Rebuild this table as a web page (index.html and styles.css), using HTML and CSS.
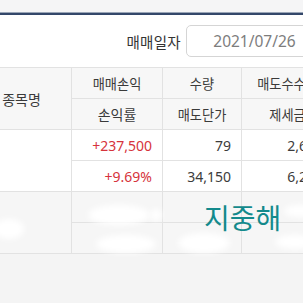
FILE: index.html
```html
<!DOCTYPE html>
<html lang="ko">
<head>
<meta charset="utf-8">
<link rel="stylesheet" href="styles.css">
</head>
<body>
<div class="page">
  <div class="topbar"></div>
  <div class="filter">
    <span class="filter-label">매매일자</span>
    <div class="date-box">2021/07/26</div>
  </div>
  <div class="table-wrap">
    <table class="grid">
      <colgroup>
        <col class="c-name"><col class="c-pl"><col class="c-qty"><col class="c-fee">
      </colgroup>
      <thead>
        <tr class="r-h1">
          <th rowspan="2">종목명</th>
          <th>매매손익</th>
          <th>수량</th>
          <th>매도수수료</th>
        </tr>
        <tr class="r-h2">
          <th>손익률</th>
          <th>매도단가</th>
          <th>제세금</th>
        </tr>
      </thead>
      <tbody>
        <tr class="r-d1">
          <td rowspan="2"></td>
          <td class="num up">+237,500</td>
          <td class="num">79</td>
          <td class="num">2,651</td>
        </tr>
        <tr class="r-d2">
          <td class="num up">+9.69%</td>
          <td class="num">34,150</td>
          <td class="num">6,213</td>
        </tr>
        <tr class="r-m1 masked">
          <td rowspan="2"></td><td></td><td></td><td></td>
        </tr>
        <tr class="r-m2 masked">
          <td></td><td></td><td></td>
        </tr>
      </tbody>
    </table>
    <div class="blob b1"></div>
    <div class="blob b2"></div>
    <div class="blob b3"></div>
    <div class="blob b4"></div>
    <div class="blob b5"></div>
    <div class="blob b6"></div>
    <div class="blob b7"></div>
    <div class="watermark">지중해</div>
  </div>
</div>
</body>
</html>
```
FILE: styles.css
```css
html, body {
  margin: 0;
  padding: 0;
  background: #f4f4f4;
}
body {
  font-family: "Noto Sans", "Noto Sans CJK KR", sans-serif;
  color: #333;
}
.page {
  width: 303px;
  height: 303px;
  overflow: hidden;
  background: #f4f4f4;
}
.topbar {
  height: 12px;
  background: #f5f5f6;
  border-bottom: 1px solid #9ba6b7;
  box-shadow: 0 2px 0 #34476a;
  margin-bottom: 2px;
}
.filter {
  background: #fff;
  height: 52px;
  display: flex;
  justify-content: flex-end;
  align-items: center;
  gap: 5px;
}
.filter-label {
  font-family: "Noto Sans CJK KR", sans-serif;
  font-size: 14.5px;
  color: #333;
  letter-spacing: 0.3px;
}
.date-box {
  flex: none;
  width: 137px;
  height: 32px;
  box-sizing: border-box;
  margin-right: -20px;
  margin-top: -1px;
  border: 1px solid #d5d5d5;
  border-radius: 5px;
  display: flex;
  align-items: center;
  justify-content: center;
  font-size: 15.5px;
  color: #7d7d7d;
  background: #fff;
}
.table-wrap {
  position: relative;
  height: 188px;
  background: #f4f4f4;
}
.grid {
  border-collapse: collapse;
  margin-left: -29px;
  table-layout: fixed;
  width: 362px;
  font-family: "Noto Sans CJK KR", sans-serif;
  font-size: 13.2px;
}
.c-name { width: 100px; }
.c-pl { width: 91px; }
.c-qty { width: 79px; }
.c-fee { width: 92px; }
.grid th, .grid td {
  border: 1px solid #e2e2e2;
  padding: 0 10px;
  white-space: nowrap;
  overflow: hidden;
}
.grid th {
  background: #f7f7f7;
  font-weight: normal;
  color: #3a3a3a;
  text-align: center;
}
.grid th:nth-child(1) { font-size: 14px; }
.grid tr { height: 31px; }
.r-h1 { height: 32px; }
.r-d1, .r-d2 { height: 32px; }
.r-m2 { height: 29px; }
.grid td {
  background: #fff;
}
.grid td.num {
  text-align: right;
  font-family: "Noto Sans", sans-serif;
  font-size: 14px;
  color: #3c3c3c;
}
.grid td.up { color: #d6333b; }
.grid tr.masked td { background: #f6f6f6; }
.blob {
  position: absolute;
  background: #fff;
  border-radius: 50%;
  filter: blur(3px);
}
.b1 { left: 88px; top: 138px; width: 62px; height: 20px; }
.b2 { left: 96px; top: 168px; width: 60px; height: 18px; }
.b3 { left: 178px; top: 166px; width: 52px; height: 20px; }
.b4 { left: 275px; top: 168px; width: 40px; height: 14px; }
.b5 { left: -6px; top: 152px; width: 30px; height: 20px; }
.b6 { left: 150px; top: 142px; width: 12px; height: 12px; }
.b7 { left: 284px; top: 138px; width: 30px; height: 12px; }
.watermark {
  position: absolute;
  left: 204px;
  top: 132px;
  font-family: "Noto Sans CJK KR", sans-serif;
  font-size: 28px;
  line-height: 1.3;
  color: #138a8c;
}
```
